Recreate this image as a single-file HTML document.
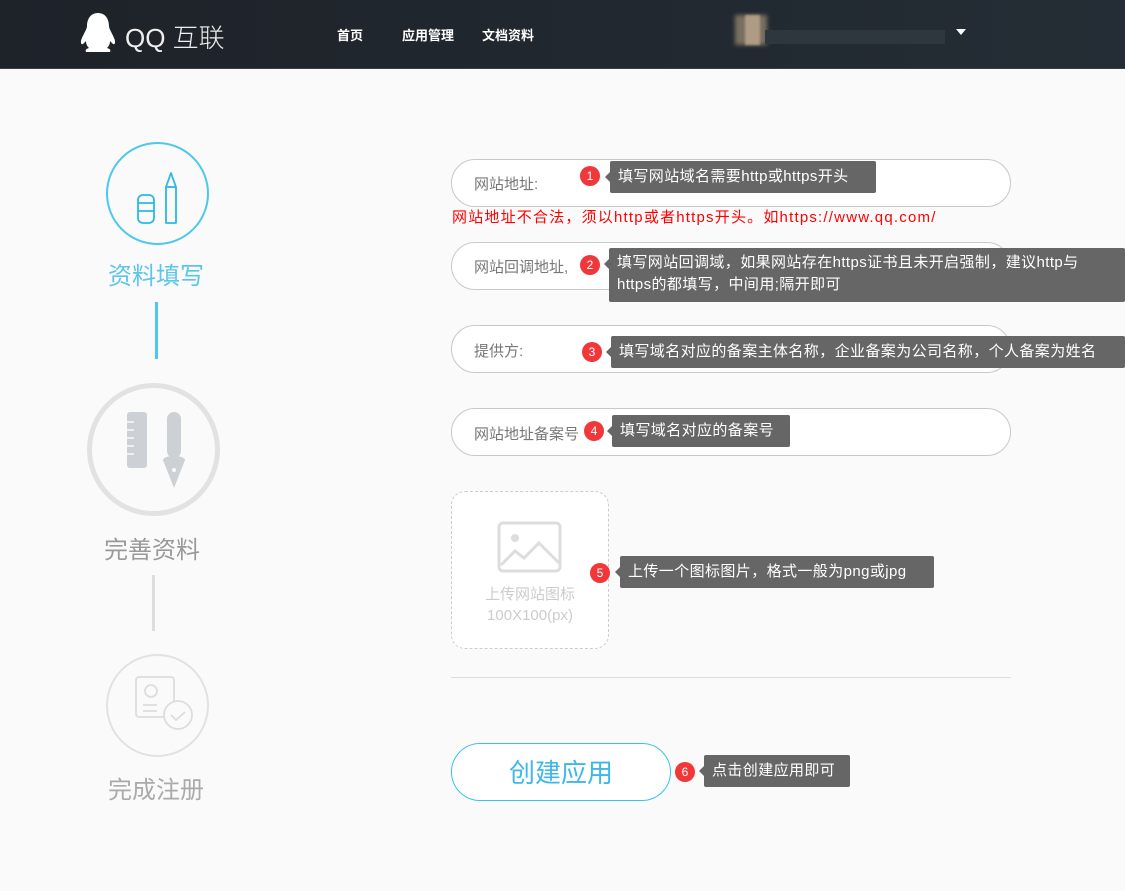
<!DOCTYPE html>
<html><head><meta charset="utf-8"><style>
*{margin:0;padding:0;box-sizing:border-box}
body{width:1125px;height:891px;background:#fafafa;position:relative;overflow:hidden;font-family:"Liberation Sans","Noto Sans CJK SC",sans-serif}
.a{position:absolute}
.hdr{left:0;top:0;width:1125px;height:69px;background:linear-gradient(90deg,#1e2229,#242d35);border-bottom:1px solid #3a3f45}
.nav{color:#fff;font-size:13px;top:25px;font-weight:bold}
.inp{left:451px;width:560px;height:48px;border:1px solid #c8c8c8;border-radius:24px;background:#fff}
.lbl{left:474px;font-size:15px;color:#777}
.bd{width:20px;height:20px;border-radius:50%;background:#f0373a;color:#fff;font-size:12px;text-align:center;line-height:20px}
.tip{background:#666;color:#fff;font-size:15px;line-height:22px;padding:5px 8px;border-radius:2px;letter-spacing:0.4px;white-space:nowrap}
.tip:before{content:"";position:absolute;left:-5px;top:11px;border:5px solid transparent;border-left:0;border-right-color:#666}
.step{font-size:24px}
</style></head><body>
<div class="a hdr"></div>
<svg class="a" style="left:80px;top:12px" width="36" height="42" viewBox="0 0 36 42"><path d="M18 1C10 1 7 8 7 14c0 3-3 7-5 12-2 4-1 7 1 6l3-3c0 3 1 5 3 7-3 1-4 2-3 4h24c1-2 0-3-3-4 2-2 3-4 3-7l3 3c2 1 3-2 1-6-2-5-5-9-5-12 0-6-3-13-11-13z" fill="#fff"/></svg>
<div class="a" style="left:125px;top:18px;color:#eee;font-size:26px;font-weight:300">QQ 互联</div>
<div class="a nav" style="left:337px">首页</div>
<div class="a nav" style="left:402px">应用管理</div>
<div class="a nav" style="left:482px">文档资料</div>
<div class="a" style="left:735px;top:15px;width:32px;height:30px;background:#7a7060;filter:blur(2px)"></div>
<div class="a" style="left:745px;top:15px;width:15px;height:30px;background:#b09c84;filter:blur(1px)"></div>
<div class="a" style="left:765px;top:30px;width:180px;height:14px;background:#2e363e"></div>
<div class="a" style="left:956px;top:29px;border:5px solid transparent;border-top:6px solid #fff;border-bottom:0"></div>

<div class="a" style="left:106px;top:142px;width:103px;height:103px;border:2px solid #4dc8ec;border-radius:50%"></div>
<svg class="a" style="left:130px;top:165px" width="50" height="60"><g fill="none" stroke="#2bb8e8" stroke-width="1.8"><rect x="8" y="30" width="16" height="28" rx="5"/><path d="M8 38h16M8 46h16"/><path d="M36 58V22l5-14 5 14v36z" stroke-linejoin="round"/><path d="M36 22h10"/></g></svg>
<div class="a step" style="left:108px;top:256px;color:#5bc6ea">资料填写</div>
<div class="a" style="left:155px;top:302px;width:3px;height:57px;background:#4dc8ec"></div>
<div class="a" style="left:87px;top:383px;width:133px;height:133px;border:5px solid #e2e2e2;border-radius:50%"></div>
<svg class="a" style="left:125px;top:410px" width="60" height="80"><rect x="2" y="2" width="20" height="56" rx="3" fill="#cdd0d4"/><g stroke="#fafafa" stroke-width="1.5"><path d="M2 12h7M2 20h7M2 28h7M2 36h7M2 44h7"/></g><rect x="42" y="2" width="14" height="46" rx="7" fill="#cdd0d4"/><path d="M38 50h22l-11 28z" fill="#cdd0d4"/><ellipse cx="49" cy="50" rx="11" ry="4" fill="#cdd0d4"/><circle cx="49" cy="60" r="2" fill="#fafafa"/></svg>
<div class="a step" style="left:104px;top:530px;color:#999">完善资料</div>
<div class="a" style="left:152px;top:575px;width:3px;height:56px;background:#ddd"></div>
<div class="a" style="left:106px;top:654px;width:103px;height:103px;border:2px solid #e2e2e2;border-radius:50%"></div>
<svg class="a" style="left:133px;top:675px" width="64" height="60"><g fill="none" stroke="#ddd" stroke-width="1.8"><rect x="3" y="2" width="38" height="40" rx="3"/><circle cx="18" cy="16" r="6"/><path d="M10 30h14M10 36h14"/><circle cx="45" cy="40" r="14" fill="#fafafa"/><path d="M38 40l5 5 9-8"/></g></svg>
<div class="a step" style="left:108px;top:770px;color:#aaa">完成注册</div>

<div class="a inp" style="top:159px"></div>
<div class="a lbl" style="top:173px">网站地址:</div>
<div class="a bd" style="left:580px;top:166px">1</div>
<div class="a tip" style="left:610px;top:161px;width:266px">填写网站域名需要http或https开头</div>
<div class="a" style="left:452px;top:206px;color:#f00;font-size:15px;letter-spacing:1.2px">网站地址不合法，须以http或者https开头。如https://www.qq.com/</div>

<div class="a inp" style="top:242px"></div>
<div class="a lbl" style="top:256px">网站回调地址,</div>
<div class="a bd" style="left:580px;top:255px">2</div>
<div class="a tip" style="left:609px;top:248px;width:516px;height:54px;padding-top:4px">填写网站回调域，如果网站存在https证书且未开启强制，建议http与<br>https的都填写，中间用;隔开即可</div>

<div class="a inp" style="top:325px"></div>
<div class="a lbl" style="top:340px">提供方:</div>
<div class="a bd" style="left:582px;top:342px">3</div>
<div class="a tip" style="left:611px;top:336px;width:514px">填写域名对应的备案主体名称，企业备案为公司名称，个人备案为姓名</div>

<div class="a inp" style="top:408px"></div>
<div class="a lbl" style="top:423px">网站地址备案号</div>
<div class="a bd" style="left:584px;top:421px">4</div>
<div class="a tip" style="left:612px;top:415px;width:178px">填写域名对应的备案号</div>

<div class="a" style="left:451px;top:491px;width:158px;height:158px;border:1px dashed #ccc;border-radius:14px;background:#fff"></div>
<svg class="a" style="left:497px;top:521px" width="66" height="52"><rect x="2" y="2" width="61" height="48" rx="4" fill="none" stroke="#ddd" stroke-width="3"/><circle cx="18" cy="17" r="4" fill="#ddd"/><path d="M4 44l14-14 9 7 15-15 20 20" fill="none" stroke="#ddd" stroke-width="3"/></svg>
<div class="a" style="left:451px;top:584px;width:158px;text-align:center;color:#ccc;font-size:15px;line-height:21px">上传网站图标<br>100X100(px)</div>
<div class="a bd" style="left:590px;top:563px">5</div>
<div class="a tip" style="left:620px;top:556px;width:314px">上传一个图标图片，格式一般为png或jpg</div>

<div class="a" style="left:451px;top:677px;width:560px;height:1px;background:#ddd"></div>
<div class="a" style="left:451px;top:743px;width:220px;height:58px;border:1.5px solid #3cc0f0;border-radius:29px;background:#fff;color:#3fb8e8;font-size:26px;text-align:center;line-height:58px">创建应用</div>
<div class="a bd" style="left:675px;top:762px">6</div>
<div class="a tip" style="left:704px;top:755px;width:146px">点击创建应用即可</div>
</body></html>
